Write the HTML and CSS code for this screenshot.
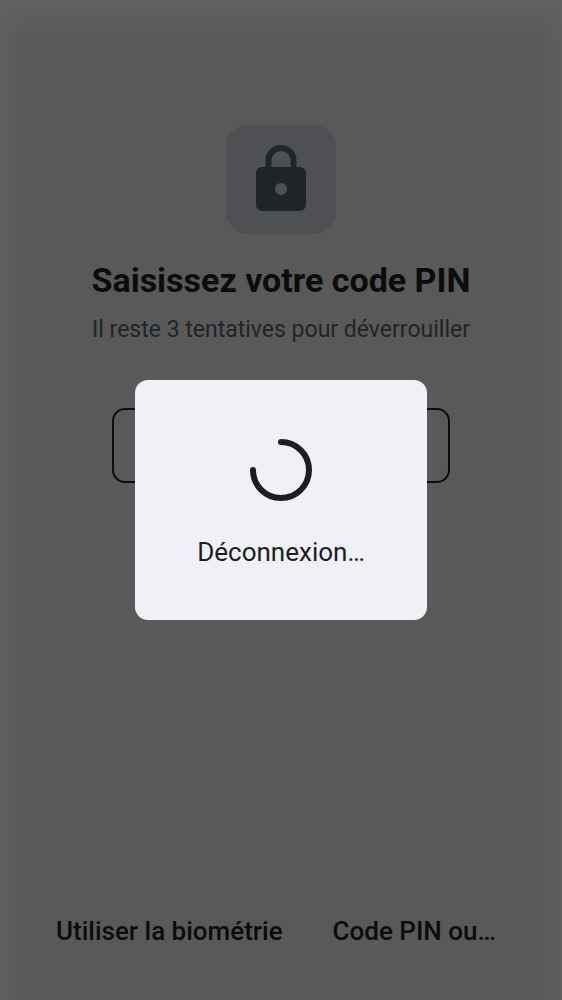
FILE: index.html
```html
<!DOCTYPE html>
<html lang="fr">
<head>
<meta charset="utf-8">
<meta name="viewport" content="width=device-width, initial-scale=1">
<title>Code PIN</title>
<link rel="stylesheet" href="styles.css">
</head>
<body>
<div class="screen">
  <main class="unlock">
    <div class="lock-tile">
      <svg class="lock-icon" viewBox="0 0 50 66" aria-hidden="true">
        <path fill="none" stroke="currentColor" stroke-width="6" d="M12.500 24V15.500a12.500 12.500 0 0 1 25 0V24"/>
        <path fill="currentColor" fill-rule="evenodd" d="M6 22H44a6 6 0 0 1 6 6V60a6 6 0 0 1-6 6H6a6 6 0 0 1-6-6V28a6 6 0 0 1 6-6ZM25 38a6 6 0 1 0 0 12a6 6 0 1 0 0-12Z"/>
      </svg>
    </div>
    <h1 class="title" id="pin-title">Saisissez votre code PIN</h1>
    <p class="subtitle">Il reste 3 tentatives pour déverrouiller</p>
    <input class="pin-field" type="password" inputmode="numeric" aria-labelledby="pin-title">
  </main>
  <footer class="actions">
    <button class="text-button" type="button">Utiliser la biométrie</button>
    <button class="text-button" type="button">Code PIN ou…</button>
  </footer>
  <div class="overlay">
    <div class="dialog" role="dialog" aria-modal="true" aria-labelledby="progress-label">
      <svg class="spinner" viewBox="0 0 64 64" aria-hidden="true">
        <path fill="none" stroke="currentColor" stroke-width="6" stroke-linecap="round" d="M32 4A28 28 0 1 1 4 32"/>
      </svg>
      <p class="progress-label" id="progress-label">Déconnexion…</p>
    </div>
  </div>
</div>
</body>
</html>
```
FILE: styles.css
```css
* {
  box-sizing: border-box;
}

body {
  margin: 0;
  font-family: Roboto, "Liberation Sans", sans-serif;
  color: #0a0c0d;
}

.screen {
  position: relative;
  display: flex;
  flex-direction: column;
  justify-content: space-between;
  min-height: 100vh;
  background:
    linear-gradient(to bottom, #616161, transparent) top / 100% 40px no-repeat,
    linear-gradient(to right, #5f5f5f, transparent) left / 26px 100% no-repeat,
    linear-gradient(to left, #5f5f5f, transparent) right / 26px 100% no-repeat,
    #595959;
}

.unlock {
  display: flex;
  flex-direction: column;
  align-items: center;
  padding: 125px 24px 0;
}

.lock-tile {
  display: flex;
  justify-content: center;
  padding: 20px 30px 23px;
  border-radius: 22px;
  background: #4f5054;
  color: #202528;
}

.lock-icon {
  display: block;
  width: 50px;
  height: 66px;
}

.title {
  margin: 26px 0 0;
  font-size: 34px;
  font-weight: 700;
  line-height: 40px;
  text-align: center;
}

.subtitle {
  margin: 16px 0 0;
  color: #202528;
  font-size: 23px;
  line-height: 28px;
  text-align: center;
}

.pin-field {
  width: 100%;
  max-width: 338px;
  height: 75px;
  margin-top: 64px;
  padding: 0 16px;
  border: 2px solid #0c0d0e;
  border-radius: 13px;
  background: transparent;
  color: inherit;
  font: inherit;
  font-size: 26px;
  text-align: center;
}

.actions {
  display: flex;
  gap: 2px;
  padding: 0 32px 44px;
}

.text-button {
  padding: 10px 24px;
  border: 0;
  background: transparent;
  color: inherit;
  font: inherit;
  font-size: 26px;
  font-weight: 500;
  line-height: 30px;
  white-space: nowrap;
}

.overlay {
  position: absolute;
  inset: 0;
  display: flex;
  align-items: center;
  justify-content: center;
}

.dialog {
  display: flex;
  flex-direction: column;
  align-items: center;
  gap: 32px;
  width: 52%;
  padding: 58px 24px 50px;
  border-radius: 13px;
  background: #f0f1f6;
  color: #1c1d22;
}

.spinner {
  display: block;
  width: 64px;
  height: 64px;
}

.progress-label {
  margin: 0;
  font-size: 26px;
  line-height: 36px;
  white-space: nowrap;
}
```
